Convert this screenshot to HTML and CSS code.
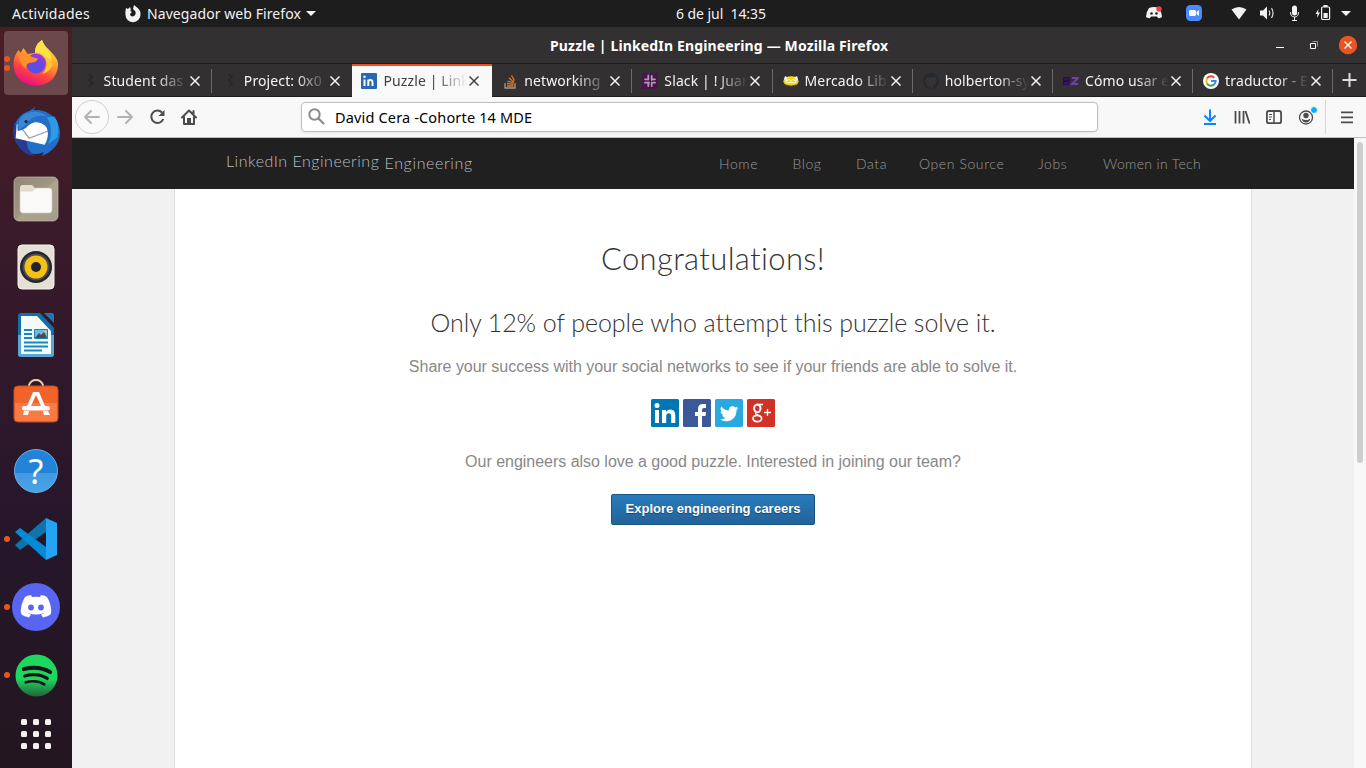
FILE: index.html
```html
<!DOCTYPE html>
<html lang="es">
<head>
<meta charset="utf-8">
<title>Puzzle | LinkedIn Engineering</title>
<link rel="stylesheet" href="styles.css">
</head>
<body>
<header class="topbar">
  <span class="activities">Actividades</span>
  <div class="appmenu">
    <svg width="16" height="18" viewBox="0 0 16 18"><path d="M1 3l2 1 2-2 1 3-1 1 2 1-2 2c0 2 2 3 4 2s2-4 1-5L8 4l1-4c2 2 7 4 6.500 9.500A7.500 7.500 0 0 1 .5 10C.3 7 .5 5 1 3z" fill="#f2f2f2"/></svg>
    <span class="appname">Navegador web Firefox</span>
    <i class="caret"></i>
  </div>
  <span class="clock">6 de jul&nbsp; 14:35</span>
  <svg class="tray" width="230" height="27" viewBox="1136 0 230 27">
    <path d="M1149 8q5-2 10 0 3 5 3 9-2 1.500-4 1l-1-1.500h-6l-1 1.500q-2 .5-4-1 0-5 3-9z" fill="#f2f2f2"/><circle cx="1151.500" cy="13.500" r="1.300" fill="#222"/><circle cx="1156.500" cy="13.500" r="1.300" fill="#222"/><circle cx="1159" cy="9" r="2.700" fill="#ed4245"/>
    <rect x="1186" y="5" width="16" height="16" rx="4.500" fill="#4a8cff"/><rect x="1189" y="10" width="7" height="6" rx="1.500" fill="#fff"/><path d="M1196.500 12l2.500-2v6l-2.500-2z" fill="#fff"/>
    <path d="M1231.500 9.500q7.500-5 15 0l-7.500 10z" fill="#f2f2f2"/>
    <path d="M1260 10.500h3l4-4v13l-4-4h-3z" fill="#f2f2f2"/><path d="M1269 10.500q1.600 2.500 0 5m2.500-7.500q3 5 0 10" fill="none" stroke="#ddd" stroke-width="1.200"/>
    <rect x="1292" y="5.500" width="5" height="10" rx="2.500" fill="#f2f2f2"/><path d="M1290.500 12q0 5 4 5t4-5M1294.500 17v3.500M1292 20.500h5" fill="none" stroke="#f2f2f2"/>
    <path d="M1318.500 9l-3 5h2l-.5 4 3-5.500h-2z" fill="#f2f2f2"/><rect x="1321.600" y="7" width="8" height="12.500" rx="1" fill="none" stroke="#f2f2f2" stroke-width="1.200"/><path d="M1323.500 5h4v2h-4zM1323.500 13h4.200v5h-4.200z" fill="#f2f2f2"/>
    <path d="M1341 11h10l-5 5z" fill="#f2f2f2"/>
  </svg>
</header>
<div class="desktop">
<nav class="dock">
  <div class="app current"><i class="dot dot-a"></i><i class="dot dot-b"></i>
    <svg width="48" height="48" viewBox="0 0 48 48"><defs><linearGradient id="ff" x1=".75" y1="0" x2=".3" y2="1"><stop offset="0" stop-color="#fff04a"/><stop offset=".4" stop-color="#ffa22c"/><stop offset=".7" stop-color="#ff453f"/><stop offset="1" stop-color="#e5098a"/></linearGradient><radialGradient id="ffp" cx=".4" cy=".8" r=".9"><stop offset="0" stop-color="#4f54e0"/><stop offset=".6" stop-color="#7542e5"/><stop offset="1" stop-color="#b833e1"/></radialGradient></defs><path d="M23 14c0-6 3-10 7-13 2 6 6 8 10 13 3 3 6 7 6 11 0 13-9 21.500-22 21.500S1.500 38 1.500 25c0-7 3-11 5-14l2 3 3-5 4 6z" fill="url(#ff)"/><path d="M29 15c7 3 8 14 1 20 12-3 13-14 7-20z" fill="#ffc535"/><circle cx="24" cy="24.500" r="10" fill="url(#ffp)"/><path d="M7 14q6-2 9 2 5 3 10 3.500-1 4-9 4.500-4 2-2.500 6-8-5-7.500-16z" fill="#ff912c"/><path d="M23 14c5-1 8 1 9 4l7 2c1-7-7-11-9-19-5 3-7 7-7 13z" fill="#ffe344"/></svg></div>
  <div class="app"><svg width="49" height="49" viewBox="3 1 46 47"><circle cx="25" cy="25" r="21" fill="#2070c9"/><path d="M5 15Q1 28 9 39q5 8 15 9-8-7-7-13l-8-9z" fill="#263b91"/><path d="M7 18l13-5 17 5v20L6 31z" fill="#fff"/><path d="M10 19l9 12 18-7" fill="none" stroke="#999" stroke-width="1.200"/><path d="M16 7L25 1l-2 3q17-1 24 14c5 14-3 25-16 30 3-4 4-8 3-11 5-9 3-17-1-19-8-5-13-1-17 3-4 3-8 3-8 3Q6 9 16 7z" fill="#246ec7"/><path d="M36 11c5 8 5 18 1 26l9-7q3-13-3-20z" fill="#2d9be3"/><path d="M16 7q12-4 20 3-14-3-20 8l-7 5Q7 12 16 7z" fill="#3988d8"/><circle cx="16" cy="15" r="1.500" fill="#222"/></svg></div>
  <div class="app"><svg width="46" height="46" viewBox="0 0 46 46"><defs><linearGradient id="fi" x2="1" y2="1"><stop stop-color="#918877"/><stop offset=".5" stop-color="#9f9684"/><stop offset=".51" stop-color="#aca390"/><stop offset="1" stop-color="#a49b88"/></linearGradient></defs><rect x="1" y="1" width="44" height="44" rx="5" fill="url(#fi)" stroke="#c1bbae" stroke-width=".7"/><path d="M7 12q0-3 3-3h9l4 4h13v15H7z" fill="#e4ded1"/><path d="M7 15h12l4-3h13q3 0 3 3v19q0 3-3 3H10q-3 0-3-3z" fill="#faf9f7" stroke="#d2cbbc" stroke-width=".6"/></svg></div>
  <div class="app"><svg width="38" height="46" viewBox="0 0 38 46"><rect x="1" y="1" width="36" height="44" rx="4" fill="#e5e0d6" stroke="#f5f2ec"/><circle cx="19" cy="23" r="16" fill="#24272f"/><circle cx="19" cy="23" r="13.500" fill="#4b4c51"/><circle cx="19" cy="23" r="11.500" fill="#f5c019"/><circle cx="19" cy="23" r="5" fill="#222426"/></svg></div>
  <div class="app"><svg width="38" height="46" viewBox="0 0 38 46"><path d="M4 1h19l14 15v26q0 3-3 3H4q-3 0-3-3V4q0-3 3-3z" fill="#176da5"/><path d="M1 23h36v19q0 3-3 3H4q-3 0-3-3z" fill="#58a7d2"/><path d="M4 4h16l14 15v23H4z" fill="#f5fafd"/><path d="M27 1h8q2 0 2 2v8z" fill="#1f79b0"/><path d="M7 18h8m-8 4h8m-8 4h8M7 30.500h24M7 34.500h24M7 38.500h18" stroke="#1686bd" stroke-width="2"/><path d="M17.500 17.500h13v9h-13z" fill="#6db9e8" stroke="#1686bd"/><path d="M18 26l4-5 2 2 3-3 3 6z" fill="#4b4b4b"/><circle cx="28.500" cy="19.500" r="1.300" fill="#f6cb37"/></svg></div>
  <div class="app"><svg class="bag" width="46" height="46" viewBox="0 0 46 46"><path d="M16 10V7q2-5 7-5t7 5v3" fill="none" stroke="#efd2ac" stroke-width="2"/><rect x="1" y="8" width="44" height="36" rx="4" fill="#f26329" stroke="#c45124"/><path d="M2 25h42v15q0 3-3 3H5q-3 0-3-3z" fill="#ff8552" opacity=".65"/><path d="M20 14h6l6 14h-4l-5-11-5 11h-4zM11 33h5l-1 4h-5zm19 0h5l2 4h-6z" fill="#fff"/><rect x="9" y="28" width="28" height="4.500" rx="2.200" fill="#fff"/></svg></div>
  <div class="app"><div class="help">?</div></div>
  <div class="app"><i class="dot"></i><svg width="44" height="44" viewBox="0 0 44 44"><path d="M1 28L32 1v14L6 33z" fill="#1173aa"/><path d="M1 15l5-4 26 19v13z" fill="#078ad6"/><path d="M32 1l11 5v32l-11 5z" fill="#24a4f2"/></svg></div>
  <div class="app"><i class="dot"></i><svg width="48" height="48" viewBox="0 0 48 48"><circle cx="24" cy="24" r="24" fill="#5865f2"/><path d="M19 12l1 2q4-.7 8 0l1-2q4 .5 6 2 5 8 4 17-3 3-8 3.500l-2-3q2-.5 3-1.500-8 3-16 0 1 1 3 1.500l-2 3q-5-.5-8-3.500-1-9 4-17 2-1.500 6-2z" fill="#fff"/><circle cx="19" cy="24.500" r="2.900" fill="#5865f2"/><circle cx="29" cy="24.500" r="2.900" fill="#5865f2"/></svg></div>
  <div class="app"><i class="dot"></i><svg width="43" height="43" viewBox="0 0 44 44"><defs><linearGradient id="sp" x2="0" y2="1"><stop offset=".58" stop-color="#1ed760"/><stop offset="1" stop-color="#24613a"/></linearGradient></defs><circle cx="22" cy="22" r="21.500" fill="url(#sp)"/><path d="M9 15.500q15-4 27 3" fill="none" stroke="#191414" stroke-width="4" stroke-linecap="round"/><path d="M10 22.500q13-3.500 23 2.500" fill="none" stroke="#191414" stroke-width="3.300" stroke-linecap="round"/><path d="M11 29q11-3 19 2" fill="none" stroke="#191414" stroke-width="2.700" stroke-linecap="round"/></svg></div>
  <div class="grid"><i></i><i></i><i></i><i></i><i></i><i></i><i></i><i></i><i></i></div>
</nav>
<main class="window">
  <div class="titlebar"><span class="wtitle">Puzzle | LinkedIn Engineering — Mozilla Firefox</span>
    <svg class="controls" width="100" height="36" viewBox="1266 27 100 36"><path d="M1276 47.500h8" stroke="#fff"/><path d="M1310.500 43.500h5v5h-5z" fill="none" stroke="#fff"/><path d="M1312.500 41.500h5v5" fill="none" stroke="#999"/><circle cx="1348" cy="45" r="9.200" fill="#e95420"/><path d="M1344.500 41.500l7 7m0-7l-7 7" stroke="#fff" stroke-width="1.400"/></svg>
  </div>
  <div class="tabs">
    <div class="tab"><svg class="fav" viewBox="0 0 16 16"><path d="M7 1l3 3-3 3 3 3-3 4" fill="none" stroke="#292829" stroke-width="2"/></svg><span class="label">Student das</span><svg class="x" viewBox="0 0 10 10"><path d="M.5.5l9 9m0-9l-9 9"/></svg></div>
    <div class="tab nosep"><svg class="fav" viewBox="0 0 16 16"><path d="M7 1l3 3-3 3 3 3-3 4" fill="none" stroke="#292829" stroke-width="2"/></svg><span class="label">Project: 0x0</span><svg class="x" viewBox="0 0 10 10"><path d="M.5.5l9 9m0-9l-9 9"/></svg></div>
    <div class="tab active"><svg class="fav" viewBox="0 0 16 16"><rect width="16" height="16" rx="1" fill="#2867b2"/><path d="M3.500 6.500v6.500M7.300 13V6.500M7.300 9q0-2 2-2t2.200 2v4" fill="none" stroke="#fff" stroke-width="2"/><circle cx="3.500" cy="3.700" r="1.300" fill="#fff"/></svg><span class="label">Puzzle | Link</span><svg class="x" viewBox="0 0 10 10"><path d="M.5.5l9 9m0-9l-9 9"/></svg></div>
    <div class="tab"><svg class="fav" viewBox="0 0 16 16"><path d="M3 10v5h10v-5" fill="none" stroke="#999" stroke-width="1.300"/><path d="M5 13h6.500M5 10.500l6.500.8M5.500 8l6 2M7 5l5 4M9.500 2.500l3 5" stroke="#e87922" stroke-width="1.300"/></svg><span class="label">networking</span><svg class="x" viewBox="0 0 10 10"><path d="M.5.5l9 9m0-9l-9 9"/></svg></div>
    <div class="tab"><svg class="fav" viewBox="0 0 16 16"><rect width="16" height="16" fill="#4a154b"/><path d="M6.300 2.500v4M3 6.300h2M9.700 3v4M9.700 6.300H13M6.300 9.700V13M3 9.700h4M11 9.700h2M9.700 9.700V13" stroke="#b29ab3" stroke-width="1.800" stroke-linecap="round"/></svg><span class="label">Slack | ! Juar</span><svg class="x" viewBox="0 0 10 10"><path d="M.5.5l9 9m0-9l-9 9"/></svg></div>
    <div class="tab"><svg class="fav" viewBox="0 0 16 16"><ellipse cx="8" cy="8.200" rx="7.600" ry="5" fill="#f5d400"/><path d="M1 6l1-3 3 1.500h6L14 3l1 3-2 3-3-2-2 1-2-1-3 2z" fill="#eee"/><path d="M5 4.500h6l2 2.500-3-1-2 1-2-1-3 1z" fill="#f5d400"/><path d="M3 9l2 1 3-1 3 1 2-1" fill="none" stroke="#fff" stroke-width="1"/><path d="M3 12q5 2 10 0" fill="none" stroke="#333667" stroke-width=".8"/></svg><span class="label">Mercado Lib</span><svg class="x" viewBox="0 0 10 10"><path d="M.5.5l9 9m0-9l-9 9"/></svg></div>
    <div class="tab"><svg class="fav" viewBox="0 0 16 16"><circle cx="8" cy="8" r="8" fill="#24292e"/><path d="M6 16v-3q-2 .5-3-1.500M6 12q-4-1-3-5l-.1-3L5 5q3-1 6 0l2-1v3q1 4-3 5v4z" fill="#343234" stroke="#343234"/></svg><span class="label">holberton-sy</span><svg class="x" viewBox="0 0 10 10"><path d="M.5.5l9 9m0-9l-9 9"/></svg></div>
    <div class="tab"><svg class="fav" viewBox="0 0 16 16"><path d="M0 4h7v8H0z" fill="#2e0755"/><path d="M1 6h5M1 10h6" stroke="#43206f" stroke-width="1"/><path d="M9 5h6l-6 6h6" fill="none" stroke="#6743a3" stroke-width="2"/></svg><span class="label">Cómo usar e</span><svg class="x" viewBox="0 0 10 10"><path d="M.5.5l9 9m0-9l-9 9"/></svg></div>
    <div class="tab"><svg class="fav" viewBox="0 0 16 16"><circle cx="8" cy="8" r="8" fill="#fff"/><g fill="none" stroke-width="2"><path d="M4 5.500A4.700 4.700 0 0 1 11.300 4.700" stroke="#ea4335"/><path d="M4 5.500a5 5 0 0 0 0 5" stroke="#fbbc05"/><path d="M4 10.500a4.700 4.700 0 0 0 7.300.8" stroke="#34a853"/><path d="M8 8h4.700q0 2-1.400 3.300" stroke="#4285f4"/></g></svg><span class="label">traductor - E</span><svg class="x" viewBox="0 0 10 10"><path d="M.5.5l9 9m0-9l-9 9"/></svg></div>
    <svg class="plus" width="32" height="32" viewBox="0 0 32 32"><path d="M9.500 16h14M16.500 9v14" stroke="#ddd" stroke-width="2"/></svg>
  </div>
  <div class="toolbar">
    <svg class="navicons" width="229" height="40" viewBox="72 97 229 40"><circle cx="92" cy="117" r="16.500" fill="#fafafa" stroke="#d0d0d0"/><g fill="none" stroke="#b3b3b3" stroke-width="2" stroke-linejoin="round" stroke-linecap="round"><path d="M99 117H85m6-6l-6 6 6 6"/><path d="M118 117h14m-6-6l6 6-6 6"/></g><path d="M162 112.500a6.200 6.200 0 1 0 1.300 6.500" fill="none" stroke="#4c4c4f" stroke-width="2"/><path d="M164.500 110v6h-6z" fill="#4c4c4f"/><path d="M182 117.500l7-7 7 7M184 116.500v7.500h10v-7.500M193.500 114v-3" fill="none" stroke="#4c4c4f" stroke-width="2" stroke-linecap="round" stroke-linejoin="round"/><path d="M187 118h4v6h-4z" fill="#4c4c4f"/></svg>
    <div class="urlbar"><svg width="18" height="18" viewBox="0 0 18 18"><circle cx="6.500" cy="6.500" r="5.200" fill="none" stroke="#8b8b8b" stroke-width="2"/><path d="M10.500 10.500l5 5" stroke="#8b8b8b" stroke-width="2.200" stroke-linecap="round"/></svg><span class="address">David Cera -Cohorte 14 MDE</span></div>
    <svg class="tools" width="176" height="40" viewBox="1190 97 176 40"><path d="M1210 109.500v12m-5.500-6l5.500 5.500 5.500-5.500M1204 124h12" fill="none" stroke="#0a84ff" stroke-width="2"/><path d="M1235.500 111v12.500M1239.500 111v12.500M1243.500 111v12.500M1245.500 111l4 12.500" stroke="#4c4c4f" stroke-width="1.800"/><rect x="1266.900" y="111" width="14.200" height="12.200" rx="2" fill="none" stroke="#4c4c4f" stroke-width="1.800"/><path d="M1274 111v12" stroke="#4c4c4f" stroke-width="1.500"/><path d="M1269 114.500h3m-3 2.500h3m-3 2.500h2" stroke="#4c4c4f"/><circle cx="1306" cy="117.500" r="6.500" fill="none" stroke="#4c4c4f" stroke-width="1.300"/><circle cx="1306" cy="115.500" r="2.700" fill="#4c4c4f"/><path d="M1301.500 118.500q4.500 3 9 0-1 4-4.500 4t-4.500-4z" fill="#4c4c4f"/><circle cx="1314" cy="110" r="3.500" fill="#00b3f4" stroke="#f9f9fa"/><path d="M1325.500 100v34" stroke="#d7d7db"/><path d="M1341 112.300h12m-12 5h12m-12 5h12" stroke="#4c4c4f" stroke-width="1.700"/></svg>
  </div>
  <div class="viewport">
    <div class="page">
      <header class="sitebar">
        <span class="brand">LinkedIn Engineering</span><span class="brand second">Engineering</span>
        <nav class="links"><a class="l1">Home</a><a class="l2">Blog</a><a class="l3">Data</a><a class="l4">Open Source</a><a class="l5">Jobs</a><a class="l6">Women in Tech</a></nav>
      </header>
      <section class="content">
        <h1>Congratulations!</h1>
        <h2>Only 12% of people who attempt this puzzle solve it.</h2>
        <p class="share">Share your success with your social networks to see if your friends are able to solve it.</p>
        <div class="social">
          <svg width="28" height="28" viewBox="0 0 28 28"><rect width="28" height="28" rx="1.500" fill="#0077b5"/><path d="M4 11h4v13H4zM11 11h4v2q1.500-2.400 4.500-2.400 4.800 0 4.800 6V24h-4.100v-6.500q0-3.200-2.300-3.200-2.700 0-2.700 3.200V24H11z" fill="#fff"/><circle cx="6" cy="6.500" r="2.500" fill="#fff"/></svg>
          <svg width="28" height="28" viewBox="0 0 28 28"><rect width="28" height="28" rx="1.500" fill="#3b5998"/><path d="M15 28V17h-3v-4h3v-3q0-5 5-5h3v4h-2q-2 0-2 2v2h4l-.5 4H19v11z" fill="#fff"/></svg>
          <svg width="28" height="28" viewBox="0 0 28 28"><rect width="28" height="28" rx="1.500" fill="#29a9e1"/><path d="M23.500 9l-2 .7L23 7.500l-2.500 1C17 5.500 13.300 8 13.800 11.500q-4.500 0-7.500-4-2 3 1 5.200l-1.600-.4q0 2.900 3 3.900H7q1 2.200 3.300 2.600Q8 21 5 20.500q4 2.500 8.700 1.400c5-1.200 8-5.400 7.700-10.500z" fill="#fff"/></svg>
          <svg width="28" height="28" viewBox="0 0 28 28"><rect width="28" height="28" rx="1.500" fill="#d23226"/><g fill="none" stroke="#fff"><ellipse cx="10.300" cy="9.300" rx="3.200" ry="3.900" stroke-width="2"/><path d="M10 5.500h6M10 13q-3 1.500 0 2.500l3 2M17 13.500h7M20.500 10v7" stroke-width="1.300"/><ellipse cx="10.300" cy="19.500" rx="4.300" ry="3.200" stroke-width="1.700"/></g></svg>
        </div>
        <p class="team">Our engineers also love a good puzzle. Interested in joining our team?</p>
        <a class="button">Explore engineering careers</a>
      </section>
    </div>
    <div class="scroll"><i></i></div>
  </div>
</main>
</div>
</body>
</html>
```
FILE: styles.css
```css
* { box-sizing: border-box; }
body { margin: 0; width: 1366px; height: 768px; overflow: hidden; font-family: "Noto Sans", "Open Sans", sans-serif; font-size: 14px; display: flex; flex-direction: column; }
svg { display: block; flex: none; }
.topbar { height: 27px; background: #1d1d1d; color: #f2f2f2; display: flex; align-items: center; flex: none; }
.activities { width: 113px; padding-left: 12px; letter-spacing: .3px; }
.appmenu { display: flex; align-items: center; width: 563px; padding-left: 12px; }
.appname { width: 155px; margin-left: 6px; margin-right: 4px; white-space: nowrap; letter-spacing: .08px; }
.caret { border: 5px solid transparent; border-top-color: #f2f2f2; border-bottom: 0; }
.clock { white-space: nowrap; width: 200px; letter-spacing: -.05px; }
.tray { margin-left: auto; }
.desktop { display: flex; flex: 1; min-height: 0; }
.dock { width: 72px; flex: none; background: linear-gradient(#481e23, #3b1b29 25%, #31182b 45%, #26162a 70%, #241620); padding-top: 2px; }
.app { height: 68px; display: flex; align-items: center; justify-content: center; position: relative; }
.app.current::before { content: ""; position: absolute; left: 4px; top: 2px; width: 64px; height: 64px; border-radius: 4px; background: #6a484b; }
.app svg { position: relative; }
.bag { margin-top: -4px; }
.dot { position: absolute; left: 4px; top: 31px; width: 6px; height: 6px; border-radius: 50%; background: #e95420; }
.dot-a { top: 27px; }
.dot-b { top: 36px; }
.help { width: 44px; height: 44px; border-radius: 50%; background: linear-gradient(#2383d8 54%, #4299df 55%, #4aa2e6); border: 1px solid #67b2eb; color: #fff; font-size: 34px; line-height: 42px; text-align: center; }
.grid { display: grid; grid-template-columns: repeat(3, 6px); gap: 6px; padding: 10px 21px; }
.grid i { height: 6px; border-radius: 1.5px; background: #f3f0ee; }
.window { flex: 1; min-width: 0; display: flex; flex-direction: column; }
.titlebar { height: 37px; flex: none; background: #323031; border-bottom: 1px solid #1d1c1c; display: flex; align-items: center; color: #fff; font-weight: 700; }
.wtitle { padding-left: 478px; white-space: nowrap; letter-spacing: .15px; }
.controls { margin-left: auto; }
.tabs { height: 33px; flex: none; background: #323031; border-bottom: 1px solid #1d1c1c; display: flex; color: #f4f4f4; }
.tab { width: 140.2px; flex: none; display: flex; align-items: center; padding-left: 10px; position: relative; height: 33px; }
.tab:first-child { margin-left: -.4px; }
.tab::after { content: ""; position: absolute; right: 0; top: 5px; width: 1px; height: 24px; background: #6d6c6d; }
.tab.nosep::after, .tab.active::after { display: none; }
.tab.active { background: #f9f9fa; color: #414141; box-shadow: inset 0 2px #f04e1e; padding-left: 9.500px; }
.fav { width: 16px; height: 16px; }
.label { width: 84px; margin-left: 6px; white-space: nowrap; letter-spacing: .12px; mask-image: linear-gradient(90deg, #000 62%, transparent 100%); }
.x { width: 10px; height: 10px; margin-left: 2px; fill: none; stroke: currentColor; stroke-width: 1.500; }
.toolbar { height: 41px; flex: none; background: #f8f8f8; border-bottom: 1px solid #bebebe; display: flex; }
.urlbar { width: 797px; height: 30px; margin-top: 5px; background: #fff; border: 1px solid #bebebe; border-radius: 4px; display: flex; align-items: center; padding-left: 6px; box-shadow: 0 1px 3px #0001; }
.address { margin-left: 9px; color: #000; white-space: nowrap; font-size: 14.500px; letter-spacing: .16px; }
.tools { margin-left: auto; }
.viewport { flex: 1; min-height: 0; display: flex; }
.page { width: 1282px; background: #f1f1f1; display: flex; flex-direction: column; }
.sitebar { height: 51px; flex: none; background: #202020; display: flex; align-items: center; padding-left: 154px; color: #b9bec1; font-family: Lato, sans-serif; font-weight: 300; }
.brand { width: 158.500px; font-size: 16px; letter-spacing: .52px; white-space: nowrap; margin-top: -6px; }
.second { margin-top: -2px; width: 334.500px; letter-spacing: .65px; }
.links { display: flex; font-size: 14px; color: #999; margin-top: -1px; }
.links a { white-space: nowrap; letter-spacing: .6px; }
.l1 { width: 73.500px; }
.l2 { width: 63.500px; }
.l3 { width: 63px; }
.l4 { width: 119px; }
.l5 { width: 65px; }
.links .l6 { letter-spacing: .35px; }
.content { flex: 1; width: 1078px; margin-left: 102px; background: #fff; border: 1px solid #ddd; border-width: 0 1px; display: flex; flex-direction: column; align-items: center; font-family: "Liberation Sans", Arial, sans-serif; color: #888; font-size: 16px; }
h1, h2 { font-family: Lato, sans-serif; font-weight: 300; color: #333; margin: 0; white-space: nowrap; font-variant-ligatures: none; }
h1 { font-size: 31px; line-height: 40px; margin-top: 49px; letter-spacing: .35px; }
h2 { font-size: 25px; line-height: 34px; margin-top: 27px; letter-spacing: -.06px; }
p { margin: 0; line-height: 20px; white-space: nowrap; letter-spacing: -.02px; }
.share { margin-top: 18px; }
.social { display: flex; gap: 4px; margin-top: 22px; }
.team { margin-top: 25px; }
.button { width: 204px; height: 31px; margin-top: 22px; border: 1px solid #1b5480; border-radius: 2px; background: linear-gradient(#287bbc, #23639a); color: #fff; font-weight: 700; font-size: 13px; line-height: 28px; text-align: center; text-shadow: 0 1px 1px #0006; white-space: nowrap; }
.scroll { width: 12px; background: #f8f8f8; padding: 4px 3px; }
.scroll i { display: block; width: 6px; height: 321px; border-radius: 3px; background: #cecece; }
```
